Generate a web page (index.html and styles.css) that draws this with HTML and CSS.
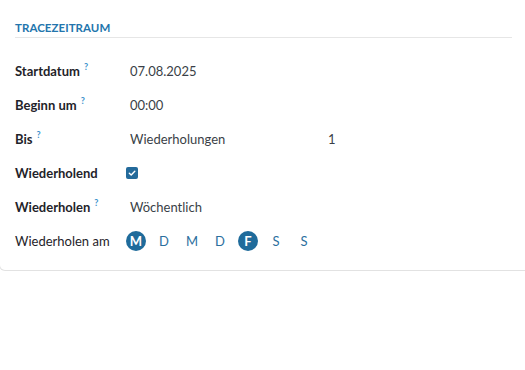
FILE: index.html
```html
<!DOCTYPE html>
<html lang="de">
<head>
<meta charset="utf-8">
<link rel="stylesheet" href="styles.css">
</head>
<body>
<div class="card">
  <div class="title">TRACEZEITRAUM</div>
  <div class="rows">
    <div class="row">
      <div class="label">Startdatum<sup class="help">?</sup></div>
      <div class="value">07.08.2025</div>
    </div>
    <div class="row">
      <div class="label">Beginn um<sup class="help">?</sup></div>
      <div class="value">00:00</div>
    </div>
    <div class="row">
      <div class="label">Bis<sup class="help">?</sup></div>
      <div class="value"><span class="select">Wiederholungen</span><span class="count">1</span></div>
    </div>
    <div class="row">
      <div class="label">Wiederholend</div>
      <div class="value"><span class="check"><svg width="8" height="8" viewBox="0 0 8 8"><path d="M1.3 4.2 L3.2 6 L6.8 2.2" fill="none" stroke="#fff" stroke-width="1.4" stroke-linecap="round" stroke-linejoin="round"/></svg></span></div>
    </div>
    <div class="row">
      <div class="label">Wiederholen<sup class="help">?</sup></div>
      <div class="value">Wöchentlich</div>
    </div>
    <div class="row">
      <div class="label normal">Wiederholen am</div>
      <div class="value days">
        <span class="day on">M</span>
        <span class="day">D</span>
        <span class="day">M</span>
        <span class="day">D</span>
        <span class="day on">F</span>
        <span class="day">S</span>
        <span class="day">S</span>
      </div>
    </div>
  </div>
</div>
</body>
</html>
```
FILE: styles.css
```css
html, body {
  margin: 0;
  padding: 0;
  background: #fff;
}
body {
  font-family: Lato, "Noto Sans", sans-serif;
  font-size: 13px;
  color: #374151;
  overflow: hidden;
}
.card {
  margin-left: -1px;
  width: calc(100% + 10px);
  box-sizing: border-box;
  border: 1px solid #e2e2e2;
  border-top: none;
  border-radius: 0 0 6px 6px;
  padding: 19px 21px 12px 15px;
}
.title {
  font-size: 11.5px;
  font-weight: 700;
  color: #2375ad;
  letter-spacing: 0.05px;
  line-height: 17px;
  padding-bottom: 1px;
  border-bottom: 1px solid #e6e6e6;
}
.rows {
  padding-top: 16px;
  display: flex;
  flex-direction: column;
}
.row {
  height: 34px;
  display: flex;
  align-items: center;
}
.label {
  width: 115px;
  flex: none;
  font-weight: 700;
  color: #1f2329;
}
.label.normal {
  font-weight: 400;
}
.help {
  font-size: 9px;
  font-weight: 700;
  color: #3b92cc;
  margin-left: 4px;
  vertical-align: 6px;
  line-height: 0;
}
.value {
  display: flex;
  align-items: center;
  color: #3a3f47;
}
.select {
  width: 198px;
}
.check {
  width: 12px;
  height: 12px;
  border-radius: 2px;
  background: #236a9b;
  margin-left: -4px;
  display: flex;
  align-items: center;
  justify-content: center;
}
.days {
  margin-left: -4px;
  gap: 8px;
}
.day {
  width: 20px;
  height: 20px;
  border-radius: 50%;
  display: flex;
  align-items: center;
  justify-content: center;
  color: #2b6f9e;
  font-size: 13px;
}
.day.on {
  background: #1f6b9b;
  color: #fff;
  font-weight: 700;
}
```
